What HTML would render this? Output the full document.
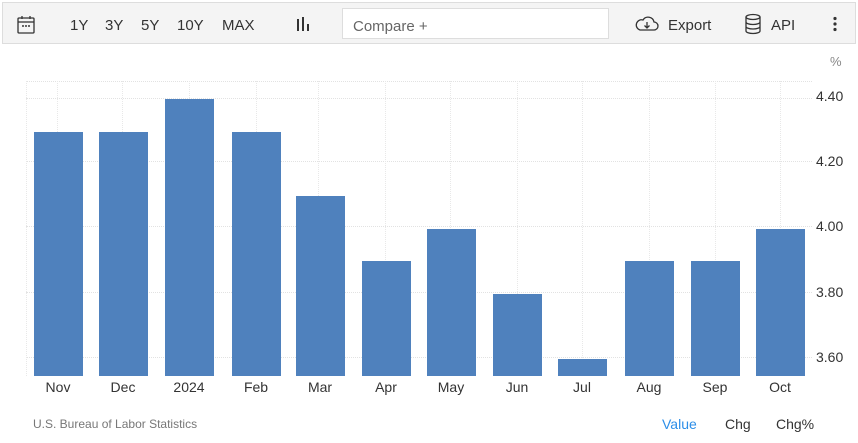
<!DOCTYPE html><html><head><style>
body{margin:0;width:858px;height:443px;background:#fff;font-family:"Liberation Sans",sans-serif;position:relative;overflow:hidden}
.tb{position:absolute;left:2px;top:2px;width:852px;height:40px;background:#f4f4f4;border:1px solid #ddd}
.t{position:absolute;top:14px;font-size:15px;color:#333}
.cmp{position:absolute;left:339px;top:5px;width:267px;height:31px;background:#fff;border:1px solid #ddd;box-sizing:border-box;font-size:15px;color:#666;padding:9px 10px}
.bar{position:absolute;background:#4f81bd;width:49px}
.gl{position:absolute;left:26px;width:786px;border-top:1px dotted #e2e2e2}
.vl{position:absolute;top:81px;height:295px;border-left:1px dotted #e8e8e8}
.yl{position:absolute;left:816px;font-size:14px;color:#333}
.ml{position:absolute;top:379px;font-size:14px;color:#333;width:60px;text-align:center}
</style></head><body>
<div class="tb">
<svg style="position:absolute;left:13px;top:12px" width="20" height="20" viewBox="0 0 20 20" fill="none" stroke="#333" stroke-width="1.3"><rect x="2" y="3" width="16" height="15" rx="1"/><line x1="2" y1="7" x2="18" y2="7"/><line x1="6" y1="1" x2="6" y2="4"/><line x1="14" y1="1" x2="14" y2="4"/><circle cx="7" cy="11" r=".4"/><circle cx="10" cy="11" r=".4"/><circle cx="13" cy="11" r=".4"/></svg>
<span class="t" style="left:67px">1Y</span><span class="t" style="left:102px">3Y</span><span class="t" style="left:138px">5Y</span><span class="t" style="left:174px">10Y</span><span class="t" style="left:219px">MAX</span>
<svg style="position:absolute;left:292px;top:13px" width="16" height="16"><rect x="2" y="3" width="2" height="12" fill="#333"/><rect x="7" y="1" width="2" height="14" fill="#333"/><rect x="12" y="8" width="2" height="7" fill="#333"/></svg>
<div class="cmp">Compare +</div>
<svg style="position:absolute;left:631px;top:11px" width="26" height="20" viewBox="0 0 26 20" fill="none" stroke="#333" stroke-width="1.3"><path d="M6 16h14a4 4 0 0 0 0-8 6 6 0 0 0-11-2 5 5 0 0 0-3 10z"/><path d="M13 8v6M10.5 11.5l2.5 2.5 2.5-2.5"/></svg>
<span class="t" style="left:665px">Export</span>
<svg style="position:absolute;left:741px;top:10px" width="18" height="22" viewBox="0 0 18 22" fill="none" stroke="#333" stroke-width="1.3"><ellipse cx="9" cy="4" rx="7" ry="2.5"/><path d="M2 4v14c0 1.4 3 2.5 7 2.5s7-1.1 7-2.5V4M2 9c0 1.4 3 2.5 7 2.5s7-1.1 7-2.5M2 13.5c0 1.4 3 2.5 7 2.5s7-1.1 7-2.5"/></svg>
<span class="t" style="left:768px">API</span>
<svg style="position:absolute;left:829px;top:13px" width="6" height="16"><circle cx="3" cy="2.5" r="1.6" fill="#333"/><circle cx="3" cy="8" r="1.6" fill="#333"/><circle cx="3" cy="13.5" r="1.6" fill="#333"/></svg>
</div>
<div style="position:absolute;left:830px;top:54px;font-size:13px;color:#888">%</div>
<div class="gl" style="top:81px"></div><div class="gl" style="top:98px"></div><div class="gl" style="top:161px"></div><div class="gl" style="top:226px"></div><div class="gl" style="top:292px"></div><div class="gl" style="top:357px"></div>
<div class="vl" style="left:26px"></div><div class="vl" style="left:57px"></div><div class="vl" style="left:122px"></div><div class="vl" style="left:189px"></div><div class="vl" style="left:256px"></div><div class="vl" style="left:318px"></div><div class="vl" style="left:385px"></div><div class="vl" style="left:450px"></div><div class="vl" style="left:517px"></div><div class="vl" style="left:582px"></div><div class="vl" style="left:649px"></div><div class="vl" style="left:715px"></div><div class="vl" style="left:780px"></div>
<div class="bar" style="left:34px;top:132px;height:244px"></div>
<div class="bar" style="left:99px;top:132px;height:244px"></div>
<div class="bar" style="left:165px;top:99px;height:277px"></div>
<div class="bar" style="left:232px;top:132px;height:244px"></div>
<div class="bar" style="left:296px;top:196px;height:180px"></div>
<div class="bar" style="left:362px;top:261px;height:115px"></div>
<div class="bar" style="left:427px;top:229px;height:147px"></div>
<div class="bar" style="left:493px;top:294px;height:82px"></div>
<div class="bar" style="left:558px;top:359px;height:17px"></div>
<div class="bar" style="left:625px;top:261px;height:115px"></div>
<div class="bar" style="left:691px;top:261px;height:115px"></div>
<div class="bar" style="left:756px;top:229px;height:147px"></div>
<div class="yl" style="top:88px">4.40</div><div class="yl" style="top:153px">4.20</div><div class="yl" style="top:218px">4.00</div><div class="yl" style="top:284px">3.80</div><div class="yl" style="top:349px">3.60</div>
<div class="ml" style="left:28px">Nov</div><div class="ml" style="left:93px">Dec</div><div class="ml" style="left:159px">2024</div><div class="ml" style="left:226px">Feb</div><div class="ml" style="left:290px">Mar</div><div class="ml" style="left:356px">Apr</div><div class="ml" style="left:421px">May</div><div class="ml" style="left:487px">Jun</div><div class="ml" style="left:552px">Jul</div><div class="ml" style="left:619px">Aug</div><div class="ml" style="left:685px">Sep</div><div class="ml" style="left:750px">Oct</div>
<div style="position:absolute;left:33px;top:417px;font-size:12px;color:#777">U.S. Bureau of Labor Statistics</div>
<div style="position:absolute;left:662px;top:416px;font-size:14px;color:#2c8ee8">Value</div>
<div style="position:absolute;left:725px;top:416px;font-size:14px;color:#333">Chg</div>
<div style="position:absolute;left:776px;top:416px;font-size:14px;color:#333">Chg%</div>
</body></html>
